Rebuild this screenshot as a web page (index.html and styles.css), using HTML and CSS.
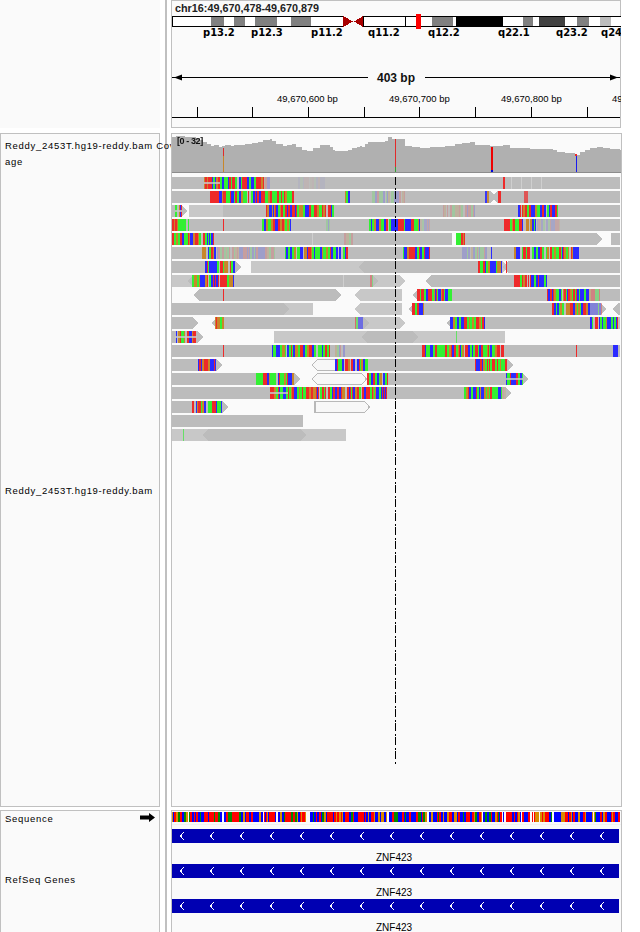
FILE: index.html
```html
<!DOCTYPE html>
<html lang="en">
<head>
    <meta charset="UTF-8">
    <title>IGV - ZNF423</title>
    <link rel="stylesheet" href="styles.css">
</head>
<body>
    <div id="igv">
        <div class="divider"></div>

        <!-- header: locus, ideogram, ruler -->
        <div class="name-panel name-header"></div>
        <div class="data-panel data-header">
            <div class="locus">chr16:49,670,478-49,670,879</div>
            <svg class="header-tracks" viewBox="172 14 449 113" width="449" height="113">
                <g class="bands">
                    <rect x="172.5" y="16.5" width="171" height="10" class="band-arm"/>
                    <rect x="363.5" y="16.5" width="260" height="10" class="band-arm"/>
                    <rect x="211" y="17" width="13" height="9" class="band-mid"/>
                    <rect x="234" y="17" width="11" height="9" class="band-mid"/>
                    <rect x="255" y="17" width="22" height="9" class="band-mid"/>
                    <rect x="291" y="17" width="20" height="9" class="band-mid"/>
                    <rect x="405" y="17" width="1" height="9" class="band-black"/>
                    <rect x="432" y="17" width="21" height="9" class="band-mid"/>
                    <rect x="456" y="17" width="47" height="9" class="band-black"/>
                    <rect x="523" y="17" width="10" height="9" class="band-mid"/>
                    <rect x="539" y="17" width="26" height="9" class="band-dark"/>
                    <rect x="577" y="17" width="12" height="9" class="band-mid"/>
                    <rect x="600" y="17" width="11" height="9" class="band-light"/>
                    <polygon points="343,16 353,21.5 343,27" class="centromere"/>
                    <polygon points="363,16 354,21.5 363,27" class="centromere"/>
                    <rect x="416" y="14" width="5" height="15" class="locus-mark"/>
                </g>
                <g class="band-labels">
                    <text x="203" y="36">p13.2</text>
                    <text x="251" y="36">p12.3</text>
                    <text x="311" y="36">p11.2</text>
                    <text x="368" y="36">q11.2</text>
                    <text x="428" y="36">q12.2</text>
                    <text x="498" y="36">q22.1</text>
                    <text x="556" y="36">q23.2</text>
                    <text x="601" y="36">q24</text>
                </g>
                <g class="span">
                    <rect x="172" y="77" width="196" height="1"/>
                    <rect x="425" y="77" width="195" height="1"/>
                    <polygon points="174,77.5 182,74.5 182,80.5"/>
                    <polygon points="618,77.5 610,74.5 610,80.5"/>
                    <text x="396" y="82">403 bp</text>
                </g>
                <g class="ruler">
                    <text x="277" y="102">49,670,600 bp</text>
                    <text x="389" y="102">49,670,700 bp</text>
                    <text x="501" y="102">49,670,800 bp</text>
                    <text x="612" y="102">49,670,900 bp</text>
                    <path d="M172 117.5H620M197.5 107V117M252.5 107V117M308.5 107V117M364.5 107V117M419.5 107V117M475.5 107V117M531.5 107V117M587.5 107V117"/>
                </g>
            </svg>
        </div>

        <!-- alignments -->
        <div class="name-panel name-align">
            <div class="track-name">Reddy_2453T.hg19-reddy.bam Cov<br>age</div>
            <div class="track-name bam-name">Reddy_2453T.hg19-reddy.bam</div>
        </div>
        <div class="data-panel data-align">
            <canvas id="alignCanvas" width="449" height="672"></canvas>
            <div class="cov-range">[0 - 32]</div>
        </div>

        <!-- sequence and genes -->
        <div class="name-panel name-bottom">
            <div class="seq-row">
                <span class="track-name">Sequence</span>
                <svg class="strand-arrow" width="15" height="9" viewBox="0 0 15 9"><polygon points="0,2.5 9,2.5 9,0 15,4.5 9,9 9,6.5 0,6.5"/></svg>
            </div>
            <div class="track-name genes-name">RefSeq Genes</div>
        </div>
        <div class="data-panel data-bottom">
            <canvas id="seqCanvas" width="448" height="10"></canvas>
            <div class="seq-rule"></div>
            <svg width="0" height="0" class="defs">
                <defs>
                    <pattern id="chevrons" x="0" y="0" width="30" height="14" patternUnits="userSpaceOnUse">
                        <polyline points="12,3 8.5,7 12,11" class="chevron"/>
                    </pattern>
                </defs>
            </svg>
            <div class="gene">
                <svg class="gene-bar" width="447" height="14"><rect width="447" height="14" class="gene-fill"/><rect width="447" height="14" fill="url(#chevrons)"/></svg>
                <div class="gene-name">ZNF423</div>
            </div>
            <div class="gene">
                <svg class="gene-bar" width="447" height="14"><rect width="447" height="14" class="gene-fill"/><rect width="447" height="14" fill="url(#chevrons)"/></svg>
                <div class="gene-name">ZNF423</div>
            </div>
            <div class="gene">
                <svg class="gene-bar" width="447" height="14"><rect width="447" height="14" class="gene-fill"/><rect width="447" height="14" fill="url(#chevrons)"/></svg>
                <div class="gene-name">ZNF423</div>
            </div>
        </div>
    </div>

    <script src="app.js"></script>
</body>
</html>
```

FILE: styles.css
```css
* {
    margin: 0;
    padding: 0;
    box-sizing: border-box;
}

body {
    background: #fff;
    font-family: 'Liberation Sans', Arial, sans-serif;
    color: #000;
    overflow: hidden;
}

#igv {
    display: grid;
    width: 640px;
    height: 932px;
    overflow: hidden;
    grid-template-columns: 160px 11px 451px;
    grid-template-rows: 128px 5px 674px 3px 122px;
}

.divider {
    grid-column: 2;
    grid-row: 1 / 6;
    width: 2px;
    margin-left: 5px;
    background: #c0c0c0;
}

.name-panel {
    grid-column: 1;
    background: #fafafa;
    border: 1px solid #c0c0c0;
    padding-left: 4px;
}

.data-panel {
    grid-column: 3;
    position: relative;
    background: #fafafa;
    border: 1px solid #c0c0c0;
}

.name-header {
    grid-row: 1;
    border: none;
}

.data-header {
    grid-row: 1;
    width: 450px;
}

.name-align,
.data-align {
    grid-row: 3;
}

.name-bottom,
.data-bottom {
    grid-row: 5;
    border-bottom: none;
}

.name-align {
    padding-top: 4px;
}

.track-name {
    font-size: 9.5px;
    line-height: 16px;
    letter-spacing: 0.7px;
    white-space: nowrap;
}

.bam-name {
    margin-top: 313px;
}

.seq-row {
    display: flex;
    justify-content: space-between;
    align-items: center;
    height: 16px;
    padding-right: 4px;
}

.strand-arrow {
    margin-top: -4px;
}

.genes-name {
    margin-top: 45px;
}

/* header tracks */
.locus {
    height: 13px;
    padding-left: 3px;
    font-size: 10.8px;
    font-weight: bold;
    line-height: 14px;
    color: #222;
}

.header-tracks {
    display: block;
}

.bands rect,
.bands polygon {
    shape-rendering: crispEdges;
}

.band-arm { fill: #fff; stroke: #000; stroke-width: 1; }
.band-mid { fill: #808080; }
.band-dark { fill: #404040; }
.band-light { fill: #bcbcbc; }
.band-black { fill: #000; }
.centromere { fill: #a80000; }
.locus-mark { fill: #ff0000; }

.band-labels text {
    font-family: 'DejaVu Sans', sans-serif;
    font-size: 10px;
    font-weight: bold;
}

.span rect,
.span polygon {
    fill: #000;
}

.span text {
    font-size: 12px;
    font-weight: bold;
    text-anchor: middle;
    fill: #111;
}

.ruler text {
    font-size: 9.5px;
}

.ruler path {
    stroke: #000;
    stroke-width: 1;
    fill: none;
    shape-rendering: crispEdges;
}

/* alignments */
#alignCanvas,
#seqCanvas {
    display: block;
}

.cov-range {
    position: absolute;
    top: 1px;
    left: 5px;
    font-size: 9px;
    font-weight: bold;
    letter-spacing: -0.4px;
    line-height: 12px;
    color: #111;
}

/* sequence and genes */
#seqCanvas {
    margin-top: 1px;
}

.seq-rule {
    height: 1px;
    margin-top: 2px;
    margin-bottom: 4px;
    background: #f2f2f2;
}

.defs {
    position: absolute;
}

.chevron {
    fill: none;
    stroke: #fff;
    stroke-width: 1;
    shape-rendering: crispEdges;
}

.gene {
    height: 35px;
}

.gene-bar {
    display: block;
}

.gene-fill {
    fill: #0000b2;
}

.gene-name {
    width: 447px;
    font-size: 10px;
    line-height: 12px;
    margin-top: 9px;
    padding-right: 3px;
    text-align: center;
}
```

FILE: app.js
```js
// reads are drawn by column, so arrow heads stay pixel sharp like the real viewer
const X0 = 172, Y0 = 134, ROW_TOP = 177, ROW_STEP = 14, READ_H = 12;
const DARK = '#bcbcbc', LIGHT = '#c8c8c8';
const BASES = ['#ee2a2a', '#33f033', '#2a2aff', '#c8862a', '#ee2a2a', '#2a2aff', '#33f033'];

// top of the coverage bars: [x, y] steps
const COVERAGE = [
    [172,137],[176,136],[185,137],[196,138],[200,140],[203,142],[207,144],[211,146],[214,145],[219,147],
    [222,146],[225,145],[231,146],[234,145],[245,144],[252,143],[258,142],[263,140],[270,139],[272,141],
    [276,144],[283,146],[287,145],[292,144],[296,147],[302,150],[307,151],[313,148],[320,145],[330,147],
    [333,150],[335,151],[345,151],[348,150],[352,148],[357,147],[360,146],[362,147],[365,144],[368,142],
    [385,141],[388,137],[392,139],[400,139],[405,146],[412,147],[420,148],[430,147],[445,146],[455,144],
    [462,143],[470,142],[475,145],[490,146],[500,146],[503,145],[510,148],[520,148],[530,149],[550,149],
    [553,150],[557,152],[565,153],[575,155],[580,152],[585,150],[590,148],[597,147],[603,148],[610,149],[620,150]
];

// each row: reads [x0, x1, dir, kind], marks [x0, x1, alpha or colour, midline]
const ROWS = [
    { reads: [[172,620,0,DARK]],
      marks: [[204,264,1,0],[204,220,1,1],[264,270,.2],[298,325,.05],[501,505,1],[511,512,'#cfcfcf'],[521,522,'#cfcfcf'],[531,532,'#cfcfcf'],[541,542,'#cfcfcf']] },
    { reads: [[172,496,1,DARK],[491,620,-1,DARK]],
      marks: [[210,219,'#ee2a2a'],[219,294,1],[345,350,1],[372,405,.2],[485,489,.9],[498,501,'#ee2a2a'],[524,528,.7]] },
    { reads: [[172,187,1,DARK],[189,620,0,DARK],[189,223,0,LIGHT]],
      marks: [[175,182,1,1],[266,334,1],[443,475,.2],[518,558,1]] },
    { reads: [[172,620,0,DARK]],
      marks: [[172,189,1],[223,224,'#ee2a2a'],[262,291,1],[326,330,.2],[369,420,1],[420,430,.15],[504,510,'#ee2a2a'],[510,537,1],[537,560,.15]] },
    { reads: [[172,452,0,DARK],[456,602,1,DARK],[611,620,0,DARK]],
      marks: [[172,214,1],[312,313,'#cfcfcf'],[342,353,.2],[456,460,'#33f033'],[460,465,1]] },
    { reads: [[172,620,0,DARK]],
      marks: [[202,216,1],[217,275,.2],[285,348,1],[403,430,1],[462,487,.2],[491,492,'#2a2aff'],[514,579,1]] },
    { reads: [[172,241,1,DARK],[251,508,1,LIGHT],[358,478,-1,DARK],[502,620,-1,DARK]],
      marks: [[205,235,1],[478,502,1],[506,507,'#ee2a2a']] },
    { reads: [[172,405,1,LIGHT],[187,378,2,DARK],[425,620,-1,DARK]],
      marks: [[192,234,1],[343,344,'#cfcfcf'],[370,373,.4],[514,520,'#ee2a2a'],[520,547,1]] },
    { reads: [[193,341,2,DARK],[354,402,-1,LIGHT],[412,620,-1,DARK]],
      marks: [[223,224,'#ee2a2a'],[417,452,1],[547,589,1],[589,600,.4]] },
    { reads: [[172,313,0,LIGHT],[172,289,1,DARK],[354,402,-1,LIGHT],[408,606,2,DARK],[612,620,-1,DARK]],
      marks: [[412,424,1],[552,590,1],[590,602,.4]] },
    { reads: [[172,198,1,DARK],[211,405,2,LIGHT],[211,369,2,DARK],[446,620,-1,DARK]],
      marks: [[215,224,1],[355,363,.55],[450,485,1],[590,618,1]] },
    { reads: [[172,203,1,DARK],[274,505,0,LIGHT],[361,418,2,DARK]],
      marks: [[175,197,1,1],[456,457,'#66e066']] },
    { reads: [[172,620,0,DARK]],
      marks: [[223,224,'#ee2a2a'],[272,330,1],[335,345,.25],[422,505,1],[576,577,'#ee2a2a'],[613,618,1]] },
    { reads: [[172,222,1,DARK],[311,513,2,'w'],[335,513,1,DARK]],
      marks: [[198,216,1],[335,368,1],[475,507,1]] },
    { reads: [[172,300,1,DARK],[311,367,2,'w'],[367,528,1,DARK]],
      marks: [[256,294,1],[367,388,1],[506,523,1,1]] },
    { reads: [[172,511,1,DARK]],
      marks: [[270,387,1],[270,288,1,1],[464,502,1],[502,506,.15]] },
    { reads: [[172,228,1,DARK],[314,370,1,'w']],
      marks: [[191,222,1]] },
    { reads: [[172,303,0,DARK]], marks: [] },
    { reads: [[172,346,0,LIGHT],[202,306,2,DARK]],
      marks: [[183,184,'#66e066']] }
];

// small repeatable random, so every load looks the same
function makeRandom(seed) {
    return function () {
        seed = (seed * 1664525 + 1013904223) % 4294967296;
        return seed / 4294967296;
    };
}

function arrowInset(x, x0, x1, dir) {
    let inset = 0;
    if ((dir === 1 || dir === 2) && x >= x1 - 6) inset = x - (x1 - 6);
    if ((dir === -1 || dir === 2) && x < x0 + 6) inset = Math.max(inset, x0 + 6 - x);
    return inset;
}

function drawRead(ctx, y, read) {
    const [x0, x1, dir, kind] = read;
    for (let x = x0; x < x1; x++) {
        const inset = arrowInset(x, x0, x1, dir);
        if (inset >= READ_H / 2) continue;
        ctx.fillStyle = kind === 'w' ? '#b8b8b8' : kind;
        ctx.fillRect(x, y + inset, 1, READ_H - inset * 2);
        if (kind === 'w' && x > x0 + 1 && x < x1 - 2) {
            ctx.fillStyle = '#f7f7f7';
            ctx.fillRect(x, y + inset + 1, 1, READ_H - inset * 2 - 2);
        }
    }
}

function drawMark(ctx, y, mark, random) {
    const [x0, x1, style, mid] = mark;
    if (typeof style === 'string') {
        ctx.fillStyle = style;
        ctx.fillRect(x0, y, x1 - x0, READ_H);
        return;
    }
    ctx.globalAlpha = style;
    let x = x0;
    while (x < x1) {
        const w = random() < 0.55 ? 2 : 1;
        if (random() > 0.06) {
            ctx.fillStyle = BASES[Math.floor(random() * BASES.length)];
            ctx.fillRect(x, y, Math.min(w, x1 - x), READ_H);
        }
        x += w;
    }
    ctx.globalAlpha = 1;
    if (mid) {
        ctx.fillStyle = 'rgba(200,200,200,0.8)';
        ctx.fillRect(x0, y + 5, x1 - x0, 2);
    }
}

function drawCoverage(ctx) {
    ctx.fillStyle = '#b0b0b0';
    COVERAGE.forEach(function (step, i) {
        const next = COVERAGE[i + 1] ? COVERAGE[i + 1][0] : 621;
        ctx.fillRect(step[0], step[1], next - step[0], 172 - step[1]);
    });
    ctx.fillStyle = '#8c8c8c';
    ctx.fillRect(172, 172, 449, 1);

    // mismatch bars
    ctx.fillStyle = '#e02a2a'; ctx.fillRect(223, 148, 1, 8);
    ctx.fillStyle = '#c8862a'; ctx.fillRect(223, 156, 1, 16);
    ctx.fillStyle = '#e02a2a'; ctx.fillRect(395, 139, 1, 28);
    ctx.fillStyle = '#33a033'; ctx.fillRect(395, 167, 1, 5);
    ctx.fillStyle = '#ee0000'; ctx.fillRect(491, 147, 2, 23);
    ctx.fillStyle = '#0000dd'; ctx.fillRect(491, 170, 2, 2);
    ctx.fillStyle = '#ee2a2a'; ctx.fillRect(575, 154, 2, 2);
    ctx.fillStyle = '#1a1aee'; ctx.fillRect(576, 156, 1, 16);
}

function drawCenterLine(ctx) {
    ctx.fillStyle = '#000';
    for (let y = ROW_TOP; y < 765; y += 14) {
        ctx.fillRect(395, y, 1, 8);
        ctx.fillRect(395, y + 11, 1, 2);
    }
}

function drawAlignments() {
    const ctx = document.getElementById('alignCanvas').getContext('2d');
    ctx.translate(-X0, -Y0);
    drawCoverage(ctx);
    ROWS.forEach(function (row, i) {
        const y = ROW_TOP + i * ROW_STEP;
        const random = makeRandom(i * 97 + 11);
        row.reads.forEach(function (read) { drawRead(ctx, y, read); });
        row.marks.forEach(function (mark) { drawMark(ctx, y, mark, random); });
    });
    drawCenterLine(ctx);
}

function drawSequence() {
    const ctx = document.getElementById('seqCanvas').getContext('2d');
    const colors = ['#ff0000', '#0000ff', '#d98a00', '#008a00', '#ff0000', '#0000ff'];
    const random = makeRandom(423);
    let x = 0;
    while (x < 448) {
        const w = random() > 0.5 ? 2 : 1;
        if (random() > 0.05) {
            ctx.fillStyle = colors[Math.floor(random() * colors.length)];
            ctx.fillRect(x, 0, w, 10);
        }
        x += w;
    }
}

drawAlignments();
drawSequence();
```
